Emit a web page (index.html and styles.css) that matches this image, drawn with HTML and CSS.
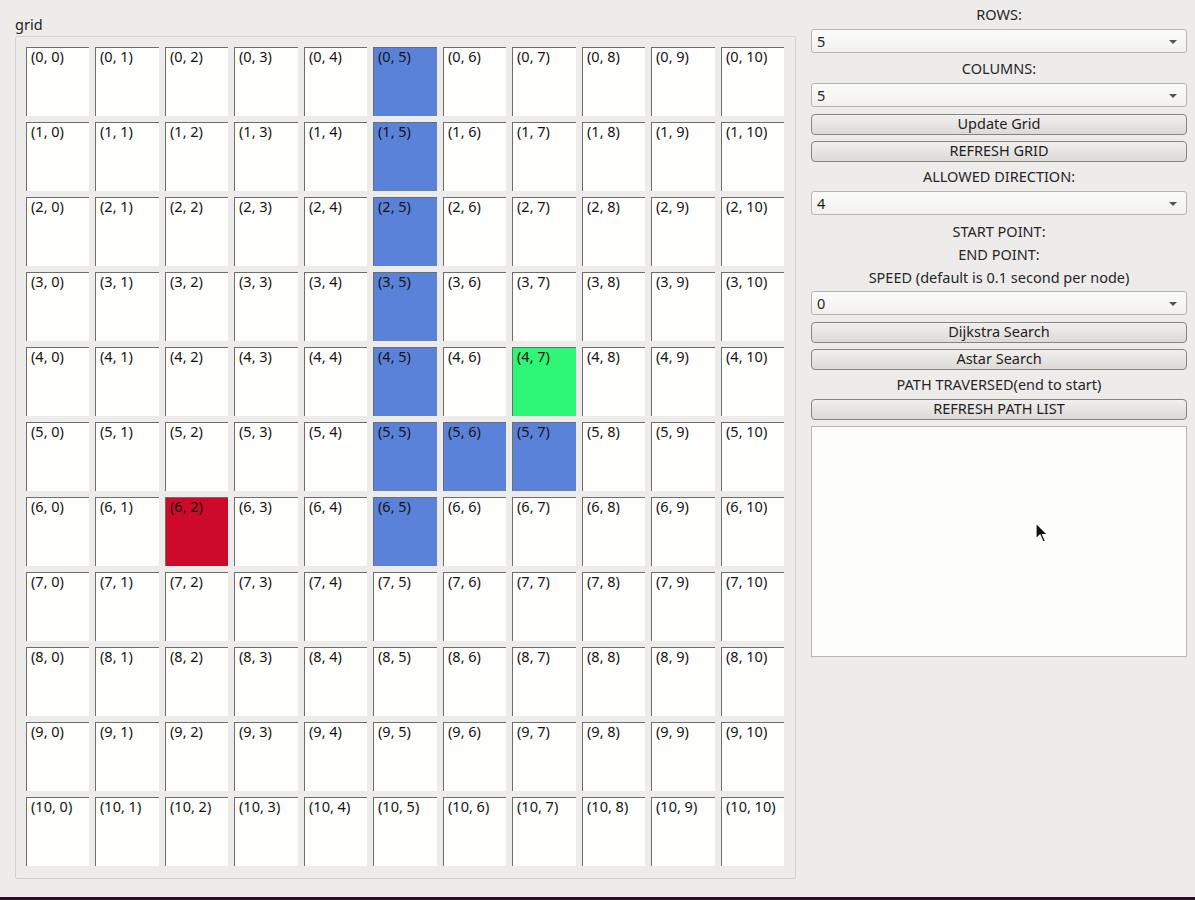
FILE: index.html
```html
<!DOCTYPE html>
<html>
<head>
<meta charset="utf-8">
<link rel="stylesheet" href="styles.css">
</head>
<body>
<div class="window">
  <div class="main">
    <section class="left">
      <div class="group-title">grid</div>
      <div class="group-frame">
        <div class="viewport">
          <div class="grid" id="grid"></div>
        </div>
      </div>
    </section>
    <aside class="panel">
      <div class="label l-first">ROWS:</div>
      <div class="combo"><span>5</span><i class="arrow"></i></div>
      <div class="label l-mid">COLUMNS:</div>
      <div class="combo"><span>5</span><i class="arrow"></i></div>
      <button class="btn b-first">Update Grid</button>
      <button class="btn b-next">REFRESH GRID</button>
      <div class="label l-mid2">ALLOWED DIRECTION:</div>
      <div class="combo"><span>4</span><i class="arrow"></i></div>
      <div class="label l-small l-start">START POINT:</div>
      <div class="label l-small">END POINT:</div>
      <div class="label l-small">SPEED (default is 0.1 second per node)</div>
      <div class="combo c-speed"><span>0</span><i class="arrow"></i></div>
      <button class="btn b-first">Dijkstra Search</button>
      <button class="btn b-next">Astar Search</button>
      <div class="label l-mid2">PATH TRAVERSED(end to start)</div>
      <button class="btn">REFRESH PATH LIST</button>
      <div class="listbox"></div>
    </aside>
  </div>
  <div class="strip"></div>
  <svg class="cursor" width="14" height="22" viewBox="0 0 14 22"><path d="M1 1 L1 17 L5 13 L8 20 L10.5 19 L7.5 12.5 L12.5 12.5 Z" fill="#111" stroke="#fff" stroke-width="1.2" stroke-linejoin="round"/></svg>
</div>
<script src="app.js"></script>
</body>
</html>
```
FILE: app.js
```js
(function(){
  var grid = document.getElementById('grid');
  var blue = {"0,5":1,"1,5":1,"2,5":1,"3,5":1,"4,5":1,"5,5":1,"5,6":1,"5,7":1,"6,5":1};
  var html = '';
  for (var r = 0; r <= 10; r++) {
    for (var c = 0; c <= 10; c++) {
      var cls = 'cell';
      var k = r + ',' + c;
      if (blue[k]) cls += ' path';
      if (k === '6,2') cls += ' end';
      if (k === '4,7') cls += ' start';
      html += '<div class="' + cls + '">(' + r + ', ' + c + ')</div>';
    }
  }
  grid.innerHTML = html;
})();
```
FILE: styles.css
```css
html, body {
  margin: 0;
  padding: 0;
}
body {
  background: #edecea;
  font-family: "Noto Sans", "DejaVu Sans", sans-serif;
  font-size: 14.5px;
  color: #1e1e1e;
  width: 1195px;
  height: 900px;
  overflow: hidden;
}
.window {
  position: relative;
  width: 1195px;
  height: 900px;
  display: flex;
  flex-direction: column;
}
.main {
  height: 897px;
  display: flex;
}
.strip {
  height: 3px;
  background: #2f0c26;
}
.left {
  padding-left: 15px;
  width: 781px;
}
.group-title {
  height: 36px;
  line-height: 18px;
  padding-top: 15px;
  box-sizing: border-box;
  color: #1e1e1e;
}
.group-frame {
  width: 781px;
  height: 843px;
  box-sizing: border-box;
  border: 1px solid #d4d2ce;
  border-radius: 2px;
  padding: 10px;
}
.viewport {
  width: 758px;
  height: 820px;
  overflow: hidden;
}
.grid {
  display: grid;
  grid-template-columns: 63px 64px 63px 64px 63px 64px 63px 64px 63px 64px 63px;
  grid-auto-rows: 69px;
  column-gap: 6px;
  row-gap: 6px;
  width: 800px;
}
.cell {
  background: #fefefc;
  border-left: 1px solid #6e6e6c;
  border-top: 1px solid #6e6e6c;
  box-sizing: border-box;
  padding: 0 0 0 4px;
  font-size: 14.5px;
  line-height: 17px;
  color: #141414;
  white-space: nowrap;
}
.cell.path { background: #5b82d9; }
.cell.end { background: #cd0a29; }
.cell.start { background: #2ef777; }
.panel {
  margin-left: 15px;
  width: 376px;
  display: flex;
  flex-direction: column;
}
.label {
  text-align: center;
  color: #262626;
  line-height: 29px;
  height: 29px;
}
.l-first { height: 29px; line-height: 29px; }
.l-mid { height: 30px; line-height: 30px; }
.l-small { height: 23px; line-height: 23px; }
.l-start { margin-top: 5px; }
.combo {
  height: 24px;
  box-sizing: border-box;
  border: 1px solid #b9b5ae;
  border-radius: 3px;
  background: linear-gradient(#fbfbf9, #f2f1ef);
  display: flex;
  align-items: center;
  justify-content: space-between;
  padding: 0 9px 0 5px;
  color: #1e1e1e;
}
.c-speed { margin-top: 2px; }
.arrow {
  width: 0;
  height: 0;
  border-left: 4px solid transparent;
  border-right: 4px solid transparent;
  border-top: 4px solid #555;
  margin-top: 1px;
}
.btn {
  height: 21px;
  box-sizing: border-box;
  border: 1px solid #878580;
  border-radius: 4px;
  background: linear-gradient(#f1f0ee, #dcdad6);
  font-family: inherit;
  font-size: 14.5px;
  color: #1e1e1e;
  padding: 0 0 2px 0;
  line-height: 17px;
  width: 376px;
}
.b-first { margin-top: 7px; }
.b-next { margin-top: 6px; }
.listbox {
  margin-top: 6px;
  height: 231px;
  box-sizing: border-box;
  border: 1px solid #b8b6b0;
  background: #fdfdf9;
}
.cursor {
  position: absolute;
  left: 1035px;
  top: 522px;
}
```
